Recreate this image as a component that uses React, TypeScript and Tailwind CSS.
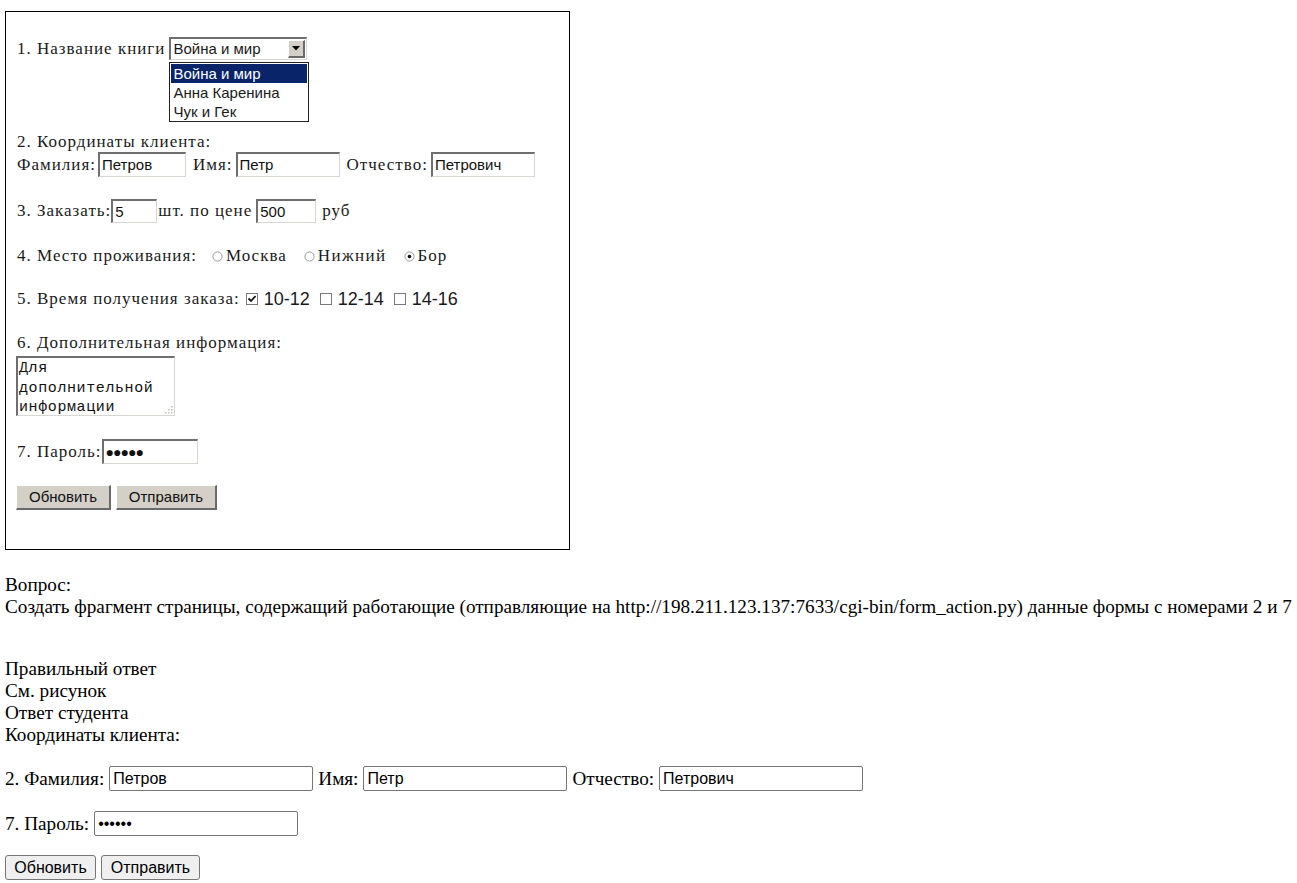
import React from 'react';

const serif = { fontFamily: '"Liberation Serif", "Times New Roman", serif' };
const sans = { fontFamily: '"Liberation Sans", Arial, sans-serif' };

// classic sunken field from the old form screenshot
const OldField: React.FC<{ w: string; h?: string; children?: React.ReactNode }> = ({ w, h = 'h-[25px]', children }) => (
  <span
    className={`inline-flex items-center ${w} ${h} border-t-2 border-l-2 border-b border-r border-t-[#6f6f6f] border-l-[#6f6f6f] border-b-[#d8d6d0] border-r-[#d8d6d0] bg-white pl-[2px] text-[15px] tracking-normal text-[#111] overflow-hidden whitespace-nowrap`}
    style={sans}
  >
    {children}
  </span>
);

const OldButton: React.FC<{ w: string; children: React.ReactNode }> = ({ w, children }) => (
  <span
    className={`inline-flex items-center justify-center ${w} h-[25px] bg-[#d4d0c8] border-t border-l border-t-white border-l-white border-b-2 border-r-2 border-b-[#6a6a6a] border-r-[#6a6a6a] text-[15px] tracking-normal text-[#111]`}
    style={sans}
  >
    {children}
  </span>
);

const Radio: React.FC<{ checked?: boolean }> = ({ checked }) => (
  <svg width="11" height="11" viewBox="0 0 11 11" className="inline-block mr-[3px]">
    <circle cx="5.5" cy="5.5" r="4.6" fill="#fff" stroke="#9a9a9a" strokeWidth="1" />
    {checked && <circle cx="5.5" cy="5.5" r="1.8" fill="#111" />}
  </svg>
);

const Check: React.FC<{ checked?: boolean }> = ({ checked }) => (
  <svg width="12" height="12" viewBox="0 0 12 12" className="inline-block mr-[6px]">
    <rect x="0.5" y="0.5" width="11" height="11" fill="#fff" stroke="#7a7a7a" />
    {checked && <path d="M2.5 5.5 L5 8 L9.5 3" fill="none" stroke="#111" strokeWidth="1.8" />}
  </svg>
);

function OldForm() {
  return (
    <div className="w-[565px] h-[539px] border border-black text-[#1a1a1a] text-[17px] tracking-[1px] pl-[11px] flex flex-col" style={serif}>
      <div className="mt-[25px] h-[23px] flex items-center">
        <span>1. Название книги</span>
        <span className="relative ml-[4px]">
          <span className="flex items-center w-[138px] h-[23px] border-t-2 border-l-2 border-b border-r border-t-[#6f6f6f] border-l-[#6f6f6f] border-b-[#d8d6d0] border-r-[#d8d6d0] bg-white text-[15px] tracking-normal pl-[2px]" style={sans}>
            <span className="flex-1">Война и мир</span>
            <span className="w-[17px] h-[18px] mr-[1px] bg-[#d4d0c8] border-t border-l border-white border-b-2 border-r-2 border-b-[#6a6a6a] border-r-[#6a6a6a] flex items-center justify-center">
              <svg width="8" height="5" viewBox="0 0 8 5"><path d="M0 0 H8 L4 4.5 Z" fill="#000" /></svg>
            </span>
          </span>
          <span className="absolute left-0 top-[25px] w-[140px] h-[60px] border border-[#222] bg-white flex flex-col text-[15px] tracking-normal leading-[19px]" style={sans}>
            <span className="bg-[#0a246a] text-white pl-[2px] mx-[1px] mt-[1px]">Война и мир</span>
            <span className="pl-[3px]">Анна Каренина</span>
            <span className="pl-[3px]">Чук и Гек</span>
          </span>
        </span>
      </div>

      <div className="mt-[72px] h-[20px] flex items-center">2. Координаты клиента:</div>
      <div className="h-[25px] flex items-center">
        <span className="mr-[2px]">Фамилия:</span>
        <OldField w="w-[88px]">Петров</OldField>
        <span className="ml-[7px] mr-[3px]">Имя:</span>
        <OldField w="w-[104px]">Петр</OldField>
        <span className="ml-[7px] mr-[3px]">Отчество:</span>
        <OldField w="w-[104px]">Петрович</OldField>
      </div>

      <div className="mt-[22px] h-[24px] flex items-center">
        <span className="mr-0">3. Заказать:</span>
        <OldField w="w-[46px]" h="h-[24px]">5</OldField>
        <span className="ml-[1px] mr-[4px]">шт. по цене</span>
        <OldField w="w-[60px]" h="h-[24px]">500</OldField>
        <span className="ml-[6px]">руб</span>
      </div>

      <div className="mt-[23px] h-[20px] flex items-center">
        <span className="mr-[15px]">4. Место проживания:</span>
        <Radio />
        <span className="mr-[17px]">Москва</span>
        <Radio />
        <span className="mr-[17px] tracking-[1.4px]">Нижний</span>
        <Radio checked />
        <span>Бор</span>
      </div>

      <div className="mt-[23px] h-[20px] flex items-center">
        <span className="mr-[6px]">5. Время получения заказа:</span>
        <Check checked />
        <span className="mr-[10px] tracking-normal text-[18px]" style={sans}>10-12</span>
        <Check />
        <span className="mr-[10px] tracking-normal text-[18px]" style={sans}>12-14</span>
        <Check />
        <span className="tracking-normal text-[18px]" style={sans}>14-16</span>
      </div>

      <div className="mt-[24px] h-[20px] flex items-center">6. Дополнительная информация:</div>
      <div className="relative mt-[3px] -ml-[1px] w-[159px] h-[60px] border-t-2 border-l-2 border-b border-r border-t-[#6f6f6f] border-l-[#6f6f6f] border-b-[#d8d6d0] border-r-[#d8d6d0] bg-white text-[15px] tracking-[0.6px] leading-[19.5px] pl-[1px] pt-[1px] text-[#111]" style={{ fontFamily: '"Liberation Mono", "Courier New", monospace' }}>
        <div>Для</div>
        <div>дополнительной</div>
        <div>информации</div>
        <svg width="9" height="9" viewBox="0 0 9 9" className="absolute right-[1px] bottom-[1px]">
          <g fill="#bdbdbd">
            <rect x="7" y="1" width="1.5" height="1.5" />
            <rect x="4" y="4" width="1.5" height="1.5" />
            <rect x="7" y="4" width="1.5" height="1.5" />
            <rect x="1" y="7" width="1.5" height="1.5" />
            <rect x="4" y="7" width="1.5" height="1.5" />
            <rect x="7" y="7" width="1.5" height="1.5" />
          </g>
        </svg>
      </div>

      <div className="mt-[23px] h-[25px] flex items-center">
        <span className="mr-0">7. Пароль:</span>
        <OldField w="w-[96px]"><span className="text-[14px] tracking-[-1px]">●●●●●</span></OldField>
      </div>

      <div className="mt-[21px] -ml-[1px] flex gap-[5px]">
        <OldButton w="w-[95px]">Обновить</OldButton>
        <OldButton w="w-[101px]">Отправить</OldButton>
      </div>
    </div>
  );
}

export default function App() {
  const input = 'w-[204px] h-[25px] border border-[#767676] rounded-[2px] px-[3px] text-[16px] text-black bg-white outline-none align-middle';
  const btn = 'h-[25px] px-[8px] border border-[#767676] rounded-[3px] bg-[#efefef] text-[16px] text-black align-middle';
  return (
    <div className="min-h-screen bg-white text-black text-[19.2px] leading-[22px] pl-[5px] pt-[11px]" style={serif}>
      <OldForm />
      <div className="mt-[24px]">Вопрос:</div>
      <div className="whitespace-nowrap">
        Создать фрагмент страницы, содержащий работающие (отправляющие на http://198.211.123.137:7633/cgi-bin/form_action.py) данные формы с номерами 2 и 7
      </div>
      <div className="mt-[40px]">Правильный ответ</div>
      <div>См. рисунок</div>
      <div>Ответ студента</div>
      <div>Координаты клиента:</div>
      <form className="mt-[20px]">
        <div className="flex items-center gap-[5px] h-[25px]">
          <span>2. Фамилия:</span>
          <input className={input} style={sans} defaultValue="Петров" />
          <span>Имя:</span>
          <input className={input} style={sans} defaultValue="Петр" />
          <span>Отчество:</span>
          <input className={input} style={sans} defaultValue="Петрович" />
        </div>
        <div className="flex items-center gap-[5px] h-[25px] mt-[20px]">
          <span>7. Пароль:</span>
          <input type="password" className={input} style={sans} defaultValue="123456" />
        </div>
        <div className="flex items-center gap-[5px] h-[25px] mt-[19px]">
          <button type="reset" className={`${btn} w-[91px]`} style={sans}>Обновить</button>
          <button type="submit" className={`${btn} w-[99px]`} style={sans}>Отправить</button>
        </div>
      </form>
    </div>
  );
}
